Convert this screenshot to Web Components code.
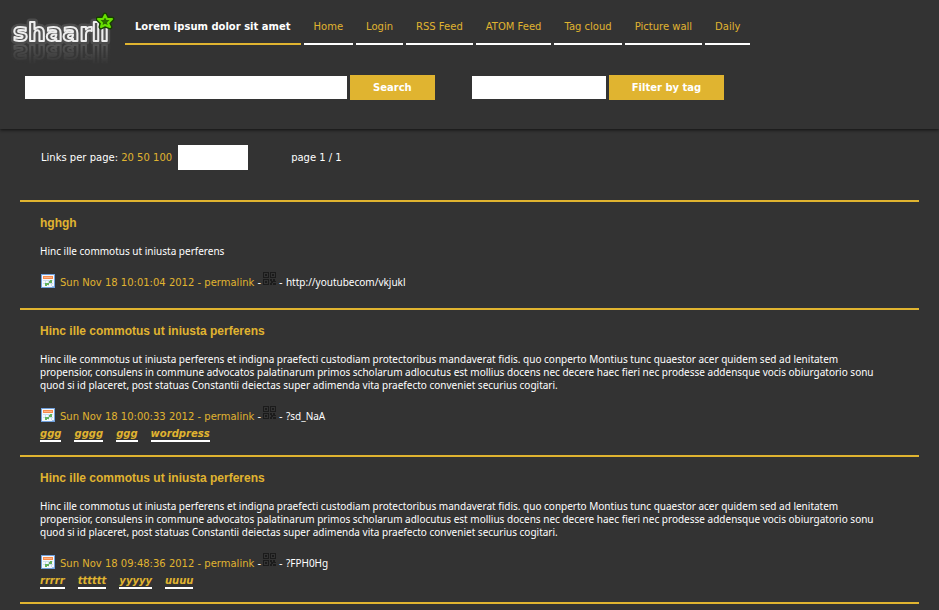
<!DOCTYPE html>
<html lang="en">
<head>
<meta charset="utf-8">
<meta name="viewport" content="width=device-width, initial-scale=1">
<title>Shaarli</title>
<style>
:root { --bg: #333; --accent: #e0b430; --text: #fff; }
body { margin: 0; background: var(--bg); color: var(--text); font: 10px/13px "DejaVu Sans", sans-serif; }
</style>
</head>
<body>
<link-shaarli></link-shaarli>
<script>
const define = (name, html, setup) => {
  const template = document.createElement('template');
  template.innerHTML = html;
  customElements.define(name, class extends HTMLElement {
    constructor() {
      super();
      this.attachShadow({ mode: 'open' }).append(template.content.cloneNode(true));
    }
    connectedCallback() { if (setup) setup(this, this.shadowRoot); }
  });
};

define('brand-logo', `
<style>
:host { display: block; width: 125px; height: 68px; flex: none; }
svg { display: block; }
text { font: bold 25px "DejaVu Sans", sans-serif; stroke-linejoin: round; }
.word { -webkit-box-reflect: below -22px linear-gradient(transparent 40%, rgba(255,255,255,.3)); height: 54px; }
.star { position: absolute; left: 96px; top: 12px; }
</style>
<div class="word"><svg width="125" height="54" role="img" aria-label="shaarli logo">
<text x="13" y="41" fill="#444" stroke="#4c4c4c" stroke-width="7" paint-order="stroke">shaarli</text>
<text x="13" y="41" fill="#555" stroke="#eee" stroke-width="2" aria-hidden="true">shaarli</text>
</svg></div>
<svg class="star" width="19" height="18" viewBox="0 0 19 18" aria-hidden="true">
<path d="M9 3l2 4 5 0-4 4 2 4-5-2-4 2 1-4-4-4 5 0z" fill="none" stroke="#174000" stroke-width="5" stroke-linejoin="round"/>
<path d="M9 3l2 4 5 0-4 4 2 4-5-2-4 2 1-4-4-4 5 0z" fill="#2a6b00" stroke="#67e000" stroke-width="2" stroke-linejoin="round"/>
</svg>`);

define('nav-item', `
<style>
:host { display: block; }
a { display: block; padding: 20px 10px 10px; border-bottom: 2px solid #fff; color: var(--accent); text-decoration: none; white-space: nowrap; }
:host([current]) a { color: #fff; font-weight: bold; border-color: var(--accent); }
</style><a href="#"><slot></slot></a>`);

define('search-box', `
<style>
:host { display: block; }
form { display: flex; align-items: center; gap: 3px; margin: 0; }
input { display: block; box-sizing: border-box; width: 100%; min-width: 0; height: 23px; border: 0; padding: 0 4px; background: #fff; font: inherit; }
.field { display: block; width: var(--field); }
button { height: 25px; border: 0; padding: 0 23px; background: var(--accent); color: #fff; font: bold 10px/13px "DejaVu Sans", sans-serif; white-space: nowrap; }
</style><form><label class="field"><input type="text"></label><button type="button"><slot></slot></button></form>`,
(el, root) => { root.querySelector('input').setAttribute('aria-label', el.textContent); });

define('page-header', `
<style>
:host { display: block; padding-bottom: 29px; box-shadow: 0 1px 3px #111; }
.top { display: flex; position: relative; }
nav { display: flex; gap: 3px; align-items: flex-start; }
.forms { display: flex; gap: 37px; padding: 7px 25px 0; }
.wide { --field: 322px; } .small { --field: 134px; }
</style>
<div class="top"><brand-logo></brand-logo>
<nav><nav-item current>Lorem ipsum dolor sit amet</nav-item><nav-item>Home</nav-item><nav-item>Login</nav-item><nav-item>RSS Feed</nav-item><nav-item>ATOM Feed</nav-item><nav-item>Tag cloud</nav-item><nav-item>Picture wall</nav-item><nav-item>Daily</nav-item></nav></div>
<div class="forms"><search-box class="wide">Search</search-box><search-box class="small">Filter by tag</search-box></div>`);

define('page-controls', `
<style>
:host { display: flex; align-items: center; padding: 16px 41px 30px; }
a { color: var(--accent); text-decoration: none; }
input { box-sizing: border-box; width: 70px; height: 25px; border: 0; margin: 0 43px 0 6px; padding: 0 4px; font: inherit; background: #fff; }
</style>
<span>Links per page: <a href="#">20</a> <a href="#">50</a> <a href="#">100</a></span>
<input type="text" aria-label="Links per page"><span>page 1 / 1</span>`);

define('calendar-icon', `
<style>:host { display: block; width: 14px; height: 14px; white-space: normal; } svg { display: block; }</style>
<svg width="14" height="14" shape-rendering="crispEdges" aria-hidden="true">
<path d="M0 0h14v14H0z" fill="#6f9fdc"/><path d="M1 1h12v12H1z" fill="#f4f8fd"/>
<path d="M2 2h10v3H2z" fill="#f58a4b"/><path d="M3 3h8v1H3z" fill="#ffb184"/>
<path d="M2 6h10v1H2zM2 9h10v1H2zM4 6h1v6H4zM7 6h1v6H7zM10 6h1v6h-1z" fill="#cbdcee"/>
<path d="M9 6h2v3H8V7h1zM4 9h4v2H6v1H4z" fill="#62b15b"/><path d="M11 12h2v1h-2z" fill="#9dc3ef"/></svg>`);

define('qr-icon', `
<style>:host { display: block; width: 13px; height: 13px; white-space: normal; } svg { display: block; }</style>
<svg width="13" height="13" shape-rendering="crispEdges" aria-hidden="true"><path fill="#1b1b1b" fill-rule="evenodd" d="M0 0h6v6H0zM1 1v4h4V1zM2 2h2v2H2zM7 0h6v6H7zM8 1v4h4V1zM9 2h2v2H9zM0 7h6v6H0zM1 8v4h4V8zM2 9h2v2H2zM7 7h2v2H7zM10 7h2v3h-2zM8 9h2v2H8zM7 11h2v2H7zM10 11h3v2h-3zM12 9h1v1h-1z"/></svg>`);

define('tag-link', `
<style>:host { display: block; } a { display: block; border-bottom: 2px solid #fff; color: var(--accent); font: italic bold 10px/12px "DejaVu Sans", sans-serif; text-decoration: none; }</style>
<a href="#"><slot></slot></a>`);

define('link-entry', `
<style>
:host { display: block; border-top: 2px solid var(--accent); padding: 13px 20px; }
h2 { margin: 0; font: bold 12px/16px "Liberation Sans", sans-serif; }
a { color: var(--accent); text-decoration: none; }
p { margin: 14px 0; padding-right: 20px; font-family: "Noto Sans", sans-serif; }
.meta { display: flex; align-items: center; height: 20px; white-space: pre; }
calendar-icon { margin: 0 5px 2px 1px; }
qr-icon { margin: 0 3px 8px 2px; }
a.url { color: #fff; font-family: "Noto Sans", sans-serif; }
.tags { display: flex; gap: 13px; box-sizing: border-box; min-height: 3px; padding-top: 2px; }
</style>
<article><h2><a href="#"><slot name="title"></slot></a></h2>
<p><slot></slot></p>
<div class="meta"><calendar-icon></calendar-icon><a href="#"><slot name="date"></slot> - permalink</a> -<qr-icon></qr-icon>- <a class="url" href="#"><slot name="url"></slot></a></div>
<div class="tags"><slot name="tag"></slot></div></article>`);

define('link-shaarli', `
<style>
:host { display: block; }
main { display: block; }
.list { margin: 0 20px; border-bottom: 2px solid var(--accent); }
</style>
<page-header></page-header>
<main><page-controls></page-controls>
<div class="list">
<link-entry><span slot="title">hghgh</span>Hinc ille commotus ut iniusta perferens<span slot="date">Sun Nov 18 10:01:04 2012</span><span slot="url">http://youtubecom/vkjukl</span></link-entry>
<link-entry><span slot="title">Hinc ille commotus ut iniusta perferens</span>Hinc ille commotus ut iniusta perferens et indigna praefecti custodiam protectoribus mandaverat fidis. quo conperto Montius tunc quaestor acer quidem sed ad lenitatem propensior, consulens in commune advocatos palatinarum primos scholarum adlocutus est mollius docens nec decere haec fieri nec prodesse addensque vocis obiurgatorio sonu quod si id placeret, post statuas Constantii deiectas super adimenda vita praefecto conveniet securius cogitari.<span slot="date">Sun Nov 18 10:00:33 2012</span><span slot="url">?sd_NaA</span><tag-link slot="tag">ggg</tag-link><tag-link slot="tag">gggg</tag-link><tag-link slot="tag">ggg</tag-link><tag-link slot="tag">wordpress</tag-link></link-entry>
<link-entry><span slot="title">Hinc ille commotus ut iniusta perferens</span>Hinc ille commotus ut iniusta perferens et indigna praefecti custodiam protectoribus mandaverat fidis. quo conperto Montius tunc quaestor acer quidem sed ad lenitatem propensior, consulens in commune advocatos palatinarum primos scholarum adlocutus est mollius docens nec decere haec fieri nec prodesse addensque vocis obiurgatorio sonu quod si id placeret, post statuas Constantii deiectas super adimenda vita praefecto conveniet securius cogitari.<span slot="date">Sun Nov 18 09:48:36 2012</span><span slot="url">?FPH0Hg</span><tag-link slot="tag">rrrrr</tag-link><tag-link slot="tag">tttttt</tag-link><tag-link slot="tag">yyyyy</tag-link><tag-link slot="tag">uuuu</tag-link></link-entry>
</div></main>`);
</script>
</body>
</html>
